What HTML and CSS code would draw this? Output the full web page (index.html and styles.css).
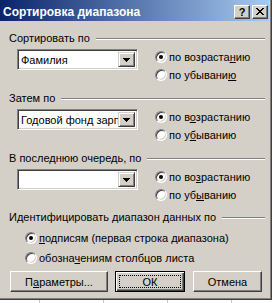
FILE: index.html
```html
<!DOCTYPE html>
<html lang="ru">
<head>
<meta charset="utf-8">
<title>Сортировка диапазона</title>
<link rel="stylesheet" href="styles.css">
</head>
<body>
<div class="dialog">
  <div class="titlebar">
    <span class="title">Сортировка диапазона</span>
    <span class="tbtn help">?</span>
    <span class="tbtn close"><svg width="8" height="7" viewBox="0 0 8 7" shape-rendering="crispEdges"><path d="M0 0h2v1h-2zM6 0h2v1h-2zM1 1h2v1h-2zM5 1h2v1h-2zM2 2h4v1h-4zM3 3h2v1h-2zM2 4h4v1h-4zM1 5h2v1h-2zM5 5h2v1h-2zM0 6h2v1h-2zM6 6h2v1h-2z" fill="#000"/></svg></span>
  </div>
  <div class="content">
    <div class="ghead first"><span>Сортировать по</span><i class="groove"></i></div>
    <div class="grow">
      <div class="combo"><span class="ctext">Фамилия</span><span class="cbtn"><svg width="7" height="4" viewBox="0 0 7 4" shape-rendering="crispEdges"><path d="M0 0h7v1h-7zM1 1h5v1h-5zM2 2h3v1h-3zM3 3h1v1h-1z" fill="#000"/></svg></span></div>
      <div class="radios">
        <div class="radio"><span class="dot on"></span><span>по возраста<u>н</u>ию</span></div>
        <div class="radio"><span class="dot"></span><span>по убывани<u>ю</u></span></div>
      </div>
    </div>

    <div class="ghead"><span>Затем по</span><i class="groove"></i></div>
    <div class="grow">
      <div class="combo"><span class="ctext">Годовой фонд зарплаты</span><span class="cbtn"><svg width="7" height="4" viewBox="0 0 7 4" shape-rendering="crispEdges"><path d="M0 0h7v1h-7zM1 1h5v1h-5zM2 2h3v1h-3zM3 3h1v1h-1z" fill="#000"/></svg></span></div>
      <div class="radios">
        <div class="radio"><span class="dot on"></span><span>по в<u>о</u>зрастанию</span></div>
        <div class="radio"><span class="dot"></span><span>по у<u>б</u>ыванию</span></div>
      </div>
    </div>

    <div class="ghead"><span>В последнюю очередь, по</span><i class="groove"></i></div>
    <div class="grow">
      <div class="combo"><span class="ctext"></span><span class="cbtn"><svg width="7" height="4" viewBox="0 0 7 4" shape-rendering="crispEdges"><path d="M0 0h7v1h-7zM1 1h5v1h-5zM2 2h3v1h-3zM3 3h1v1h-1z" fill="#000"/></svg></span></div>
      <div class="radios">
        <div class="radio"><span class="dot on"></span><span>по во<u>з</u>растанию</span></div>
        <div class="radio"><span class="dot"></span><span>по уб<u>ы</u>ванию</span></div>
      </div>
    </div>

    <div class="ghead last"><span>Идентифицировать диапазон данных по</span><i class="groove"></i></div>
    <div class="idradios">
      <div class="radio tall"><span class="dot on"></span><span><u>п</u>одписям (первая строка диапазона)</span></div>
      <div class="radio tall"><span class="dot"></span><span>обозна<u>ч</u>ениям столбцов листа</span></div>
    </div>

    <div class="buttons">
      <div class="btn params">П<u>а</u>раметры...</div>
      <div class="btn ok default"><span class="focus">ОК</span></div>
      <div class="btn cancel">Отмена</div>
    </div>
  </div>
</div>
</body>
</html>
```
FILE: styles.css
```css
* { box-sizing: border-box; }

html, body {
  margin: 0;
  padding: 0;
}

body {
  width: 275px;
  height: 303px;
  overflow: hidden;
  background-color: #ffffff;
  background-image: repeating-linear-gradient(to right, transparent 0, transparent 39px, #c8c8c8 39px, #c8c8c8 40px, transparent 40px, transparent 64px);
  font-family: "Liberation Sans", Arial, sans-serif;
  font-size: 11px;
  color: #000;
}

.dialog {
  width: 272px;
  height: 300px;
  background: #d4d0c8;
  border-right: 1px solid #404040;
  border-bottom: 1px solid #404040;
  box-shadow: inset -1px -1px 0 #808080;
  display: flex;
  flex-direction: column;
}

.titlebar {
  width: 269px;
  height: 21px;
  background: linear-gradient(to right, #0a246a, #a6caf0);
  display: flex;
  align-items: flex-start;
  padding-right: 1px;
}

.title {
  flex: 1;
  color: #fff;
  font-weight: bold;
  font-size: 12px;
  line-height: 14px;
  padding-left: 3px;
  margin-top: 5px;
  white-space: nowrap;
}

.tbtn {
  width: 16px;
  height: 14px;
  margin-top: 5px;
  background: #d4d0c8;
  border-top: 1px solid #fff;
  border-left: 1px solid #fff;
  border-right: 1px solid #404040;
  border-bottom: 1px solid #404040;
  box-shadow: inset -1px -1px 0 #808080;
  display: flex;
  align-items: center;
  justify-content: center;
}

.help {
  margin-right: 2px;
  font-weight: bold;
  font-size: 11px;
  line-height: 10px;
  padding-bottom: 1px;
}

.close svg { display: block; margin-top: -1px; }

.content {
  flex: 1;
  display: flex;
  flex-direction: column;
}

.ghead {
  height: 14px;
  display: flex;
  align-items: center;
  gap: 6px;
  padding-left: 9px;
  padding-right: 6px;
  margin-top: 7px;
  white-space: nowrap;
}

.ghead.first { margin-top: 10px; }
.ghead.last { margin-top: 6px; }

.groove {
  flex: 1;
  height: 2px;
  border-top: 1px solid #808080;
  border-bottom: 1px solid #fff;
  margin-top: 1px;
}

.grow {
  height: 36px;
  display: flex;
  align-items: flex-start;
  margin-top: 3px;
}

.combo {
  width: 121px;
  height: 21px;
  margin-left: 17px;
  margin-top: 1px;
  background: #fff;
  border-top: 1px solid #808080;
  border-left: 1px solid #808080;
  border-right: 1px solid #fff;
  border-bottom: 1px solid #fff;
  box-shadow: inset 1px 1px 0 #404040, inset -1px -1px 0 #d4d0c8;
  padding: 2px;
  display: flex;
  align-items: stretch;
}

.ctext {
  flex: 1;
  overflow: hidden;
  white-space: nowrap;
  line-height: 17px;
  padding-left: 1px;
}

.cbtn {
  width: 17px;
  flex: none;
  background: #d4d0c8;
  border-top: 1px solid #d4d0c8;
  border-left: 1px solid #d4d0c8;
  border-right: 1px solid #404040;
  border-bottom: 1px solid #404040;
  box-shadow: inset 1px 1px 0 #fff, inset -1px -1px 0 #808080;
  display: flex;
  align-items: center;
  justify-content: center;
}

.cbtn svg { display: block; }

.radios {
  margin-left: 17px;
  display: flex;
  flex-direction: column;
}

.radio {
  height: 18px;
  display: flex;
  align-items: center;
  gap: 2px;
  white-space: nowrap;
}

.radio.tall { height: 20px; }

.dot {
  width: 12px;
  height: 12px;
  flex: none;
  border-radius: 50%;
  background: #fff;
  border: 1px solid;
  border-color: #808080 #ffffff #ffffff #808080;
  box-shadow: inset 1px 1px 0 #404040, inset -1px -1px 0 #d4d0c8;
  display: flex;
  align-items: center;
  justify-content: center;
}

.dot.on::after {
  content: "";
  width: 4px;
  height: 4px;
  border-radius: 50%;
  background: #000;
}

.idradios {
  margin-top: 4px;
  padding-left: 25px;
  display: flex;
  flex-direction: column;
}

u { text-decoration: underline; text-underline-offset: 1px; }

.buttons {
  margin-top: 3px;
  padding-left: 10px;
  display: flex;
}

.btn {
  height: 21px;
  background: #d4d0c8;
  border-top: 1px solid #fff;
  border-left: 1px solid #fff;
  border-right: 1px solid #404040;
  border-bottom: 1px solid #404040;
  box-shadow: inset -1px -1px 0 #808080;
  display: flex;
  align-items: center;
  justify-content: center;
  white-space: nowrap;
}

.params { width: 98px; }
.ok { width: 70px; margin-left: 7px; }
.cancel { width: 69px; margin-left: 8px; }

.btn.default {
  border: 1px solid #000;
  box-shadow: inset 1px 1px 0 #fff, inset -1px -1px 0 #404040, inset -2px -2px 0 #808080;
  padding: 3px;
  align-items: stretch;
  justify-content: stretch;
}

.focus {
  flex: 1;
  border: 1px dotted #000;
  display: flex;
  align-items: center;
  justify-content: center;
}
```
